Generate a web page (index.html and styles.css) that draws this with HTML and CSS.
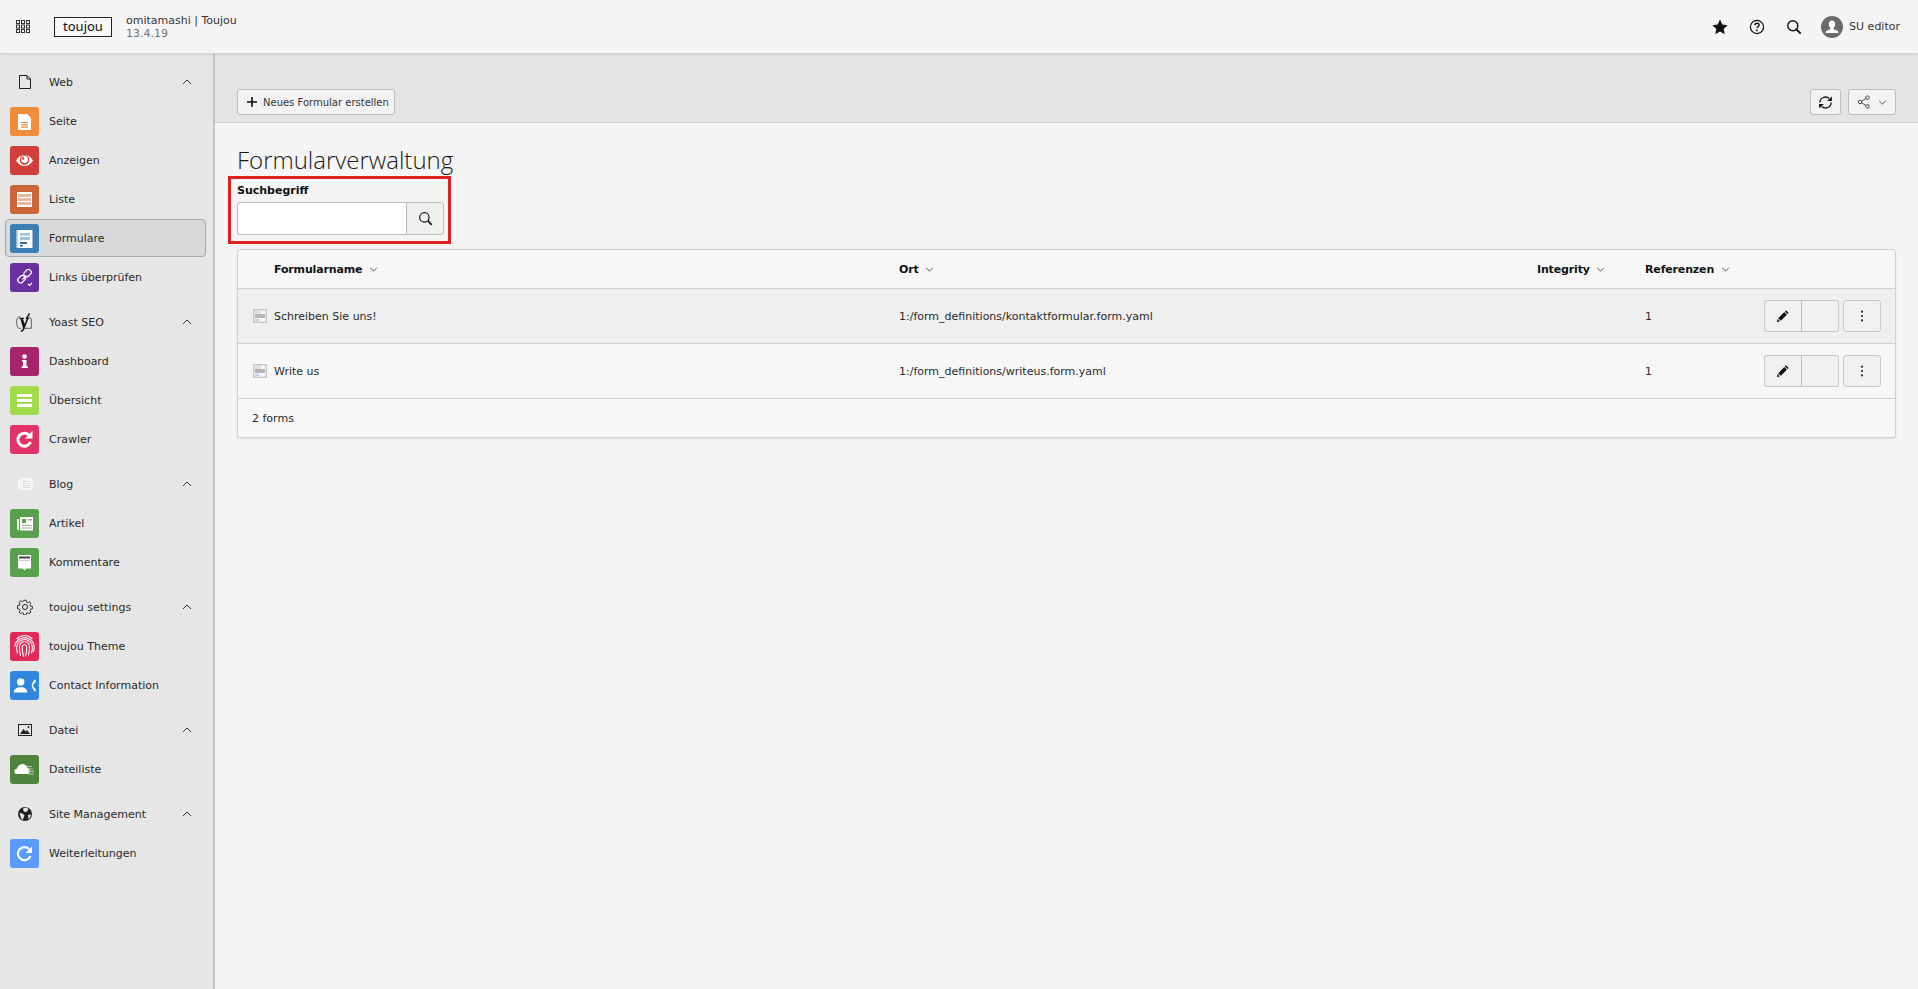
FILE: index.html
```html
<!DOCTYPE html>
<html lang="de">
<head>
<meta charset="utf-8">
<title>Formularverwaltung</title>
<link rel="stylesheet" href="styles.css">
</head>
<body>
<header class="topbar">
  <svg class="grid-icon" viewBox="0 0 14 13"><g fill="none" stroke="#333" stroke-width="1"><rect x=".5" y=".5" width="3" height="3"/><rect x="5.5" y=".5" width="3" height="3"/><rect x="10.5" y=".5" width="3" height="3"/><rect x=".5" y="5" width="3" height="3"/><rect x="5.5" y="5" width="3" height="3"/><rect x="10.5" y="5" width="3" height="3"/><rect x=".5" y="9.5" width="3" height="3"/><rect x="5.5" y="9.5" width="3" height="3"/><rect x="10.5" y="9.5" width="3" height="3"/></g></svg>
  <div class="logo">toujou</div>
  <div class="site"><div class="site-name">omitamashi | Toujou</div><div class="site-version">13.4.19</div></div>
  <div class="top-actions">
    <svg class="top-icon" viewBox="0 0 16 16"><path fill="#111" d="M8 .6l2.3 4.9 5.3.7-3.9 3.7 1 5.3L8 12.600l-4.700 2.600 1-5.300L.4 6.200l5.300-.7z"/></svg>
    <svg class="top-icon" viewBox="0 0 16 16"><circle cx="8" cy="8" r="6.600" fill="none" stroke="#111" stroke-width="1.200"/><path fill="none" stroke="#111" stroke-width="1.400" d="M5.900 6.300c0-1.300 1-2 2.100-2s2.100.8 2.100 1.900c0 1.600-2.100 1.500-2.100 3.100"/><circle cx="8" cy="11.300" r=".9" fill="#111"/></svg>
    <svg class="top-icon" viewBox="0 0 16 16"><circle cx="6.800" cy="6.800" r="5" fill="none" stroke="#111" stroke-width="1.400"/><path stroke="#111" stroke-width="1.800" d="M10.500 10.500l4.200 4.200"/></svg>
    <div class="user">
      <svg class="avatar" viewBox="0 0 22 22"><circle cx="11" cy="11" r="11" fill="#6b6b6b"/><path fill="#fff" d="M11 4.500c2 0 3.200 1.500 3.200 3.600 0 1.700-.7 3.100-1.600 3.900v1.300l3.800 1.500c.6.300 1 .7 1 1.300v.9H4.600v-.9c0-.6.400-1 1-1.300l3.800-1.500V12c-.9-.8-1.600-2.200-1.600-3.900 0-2.100 1.200-3.600 3.200-3.600z"/></svg>
      <span>SU editor</span>
    </div>
  </div>
</header>
<div class="main">
  <nav class="sidebar">
    <section class="group">
      <div class="group-head">
        <span class="head-icon"><svg viewBox="0 0 16 16"><path fill="none" stroke="#222" stroke-width="1" d="M2.500 1.500h7.500l3.500 3.500v9.500h-11z"/><path fill="none" stroke="#222" d="M10 1.500v3.500h3.500"/></svg></span>
        <span class="label">Web</span><svg class="chev" viewBox="0 0 10 6"><path d="M1 5l4-4 4 4"/></svg>
      </div>
      <a class="item"><span class="mod orange"><svg viewBox="0 0 29 29"><path fill="#fff" d="M8 7h9l4 4v12H8z"/><path stroke="#f18c38" stroke-width="1.200" d="M11 15.500h7M11 17.800h7M11 20.100h7"/></svg></span>Seite</a>
      <a class="item"><span class="mod red"><svg viewBox="0 0 29 29"><path fill="#fff" d="M6 14.500c2.500-3.800 5.300-5.500 8.500-5.500s6 1.700 8.500 5.500c-2.500 3.800-5.300 5.500-8.500 5.500S8.500 18.300 6 14.500z"/><circle cx="14.500" cy="14" r="4.800" fill="#d13f3b"/><circle cx="14.500" cy="13.500" r="3.400" fill="#fff"/><circle cx="13" cy="12.500" r="1.300" fill="#d13f3b"/></svg></span>Anzeigen</a>
      <a class="item"><span class="mod rust"><svg viewBox="0 0 29 29"><rect x="7" y="7" width="15" height="15" fill="#e5b8a2"/><path fill="#fff" d="M7 7h15v2H7zM7 12h15v1H7zM7 16h15v1H7zM7 20h15v2H7zM7 7h1v15H7zM21 7h1v15h-1z"/></svg></span>Liste</a>
      <a class="item active"><span class="mod blue"><svg viewBox="0 0 29 29"><rect x="6" y="6" width="16" height="18" fill="#fff" opacity=".45"/><rect x="7.500" y="6" width="15" height="18" fill="#fff"/><path fill="#9dc0dc" d="M10 9h10v2.500H10zM10 13h10v3H10z"/><path fill="#2f6d9f" d="M10 18h7v2h-7zM10 21h3v1.500h-3z"/></svg></span>Formulare</a>
      <a class="item"><span class="mod purple"><svg viewBox="0 0 29 29"><g fill="none" stroke="#fff" stroke-width="1.200"><rect x="13.500" y="7.500" width="8" height="5.500" rx="2.500" transform="rotate(-45 17.500 10.250)"/><rect x="7.500" y="13.500" width="8" height="5.500" rx="2.500" transform="rotate(-45 11.500 16.250)"/><path d="M12.500 16.500l4-4M18 21l1.500 1.500L22 20"/></g></svg></span>Links überprüfen</a>
    </section>
    <section class="group">
      <div class="group-head">
        <span class="head-icon"><svg class="yoast" viewBox="0 0 18 18"><path fill="none" stroke="#333" stroke-width=".7" d="M5 3.500H3.500C2.200 4.500 1.500 6.500 1.500 9s.7 4.500 2 5.500H6M13 3.500l2.500 2v9h-7"/><path fill="#111" d="M4 4.500h4.500v1l-1 .3 1.700 4.600 1.900-4.900-1-.1v-.9h3.400v1l-.9.2-3.700 9.500c-.7 1.700-1.500 2.500-3 2.800l-.6-1.300c1.300-.4 2-1.100 2.400-2.100L5.200 5.800 4 5.500z"/><path stroke="#111" stroke-width="1.300" d="M13.800 .3l-2.800 4.500"/></svg></span>
        <span class="label">Yoast SEO</span><svg class="chev" viewBox="0 0 10 6"><path d="M1 5l4-4 4 4"/></svg>
      </div>
      <a class="item"><span class="mod magenta"><svg viewBox="0 0 29 29"><circle cx="14.500" cy="9.500" r="2.300" fill="#fff"/><path fill="#fff" d="M12 13h4.500v6.500H18V21h-6.500v-1.500H13V14.500h-1z"/></svg></span>Dashboard</a>
      <a class="item"><span class="mod lime"><svg viewBox="0 0 29 29"><path fill="#fff" d="M7 8h15v3H7zM7 13h15v3H7zM7 18h15v3H7z"/></svg></span>Übersicht</a>
      <a class="item"><span class="mod pink"><svg viewBox="0 0 29 29"><path fill="none" stroke="#fff" stroke-width="3" d="M20.500 17a6.500 6.500 0 1 1-1.500-7"/><path fill="#fff" d="M22.500 6v7.500h-7.500z"/></svg></span>Crawler</a>
    </section>
    <section class="group">
      <div class="group-head">
        <span class="head-icon"><svg viewBox="0 0 16 16"><path fill="#f8f8f8" d="M1 4h2v10H1zM3.500 2h12v12h-12z"/><path fill="#dcdcdc" d="M5.500 4.500h3.500v3H5.500zM10 5h3.500v1H10zM10 7h3.500v1H10zM5.500 9h8v1h-8zM5.500 11h8v1h-8z"/></svg></span>
        <span class="label">Blog</span><svg class="chev" viewBox="0 0 10 6"><path d="M1 5l4-4 4 4"/></svg>
      </div>
      <a class="item"><span class="mod green"><svg viewBox="0 0 29 29"><path fill="#fff" opacity=".85" d="M7 10h2v11H7z"/><rect x="10" y="8" width="13" height="13.500" fill="#fff"/><path fill="#59a14f" d="M12 10h4v4h-4z"/><path fill="#aaa" d="M17.500 10H22v1.500h-4.500zM12 16h10v1H12zM12 18.500h10v1H12z"/></svg></span>Artikel</a>
      <a class="item"><span class="mod green"><svg viewBox="0 0 29 29"><path fill="#fff" d="M8 7h13v13.500h-4.500l-2 2-2-2H8z"/><path fill="#444" d="M9 8.500h11v2H9z"/><path fill="#ccc" d="M9 12h11v1H9z"/></svg></span>Kommentare</a>
    </section>
    <section class="group">
      <div class="group-head">
        <span class="head-icon"><svg viewBox="0 0 16 16"><path fill="none" stroke="#222" stroke-width="1" d="M6.800 1h2.400l.4 2 1.300.6 1.700-1.100 1.700 1.700-1.100 1.700.6 1.300 2 .4v2.400l-2 .4-.6 1.300 1.100 1.700-1.700 1.700-1.700-1.100-1.300.6-.4 2H6.800l-.4-2-1.300-.6-1.700 1.100-1.700-1.700 1.100-1.700-.6-1.300-2-.4V6.600l2-.4.6-1.300-1.100-1.700 1.700-1.700 1.700 1.100 1.300-.6z" transform="translate(.4 .3) scale(.95)"/><circle cx="8" cy="8" r="2.500" fill="none" stroke="#222"/></svg></span>
        <span class="label">toujou settings</span><svg class="chev" viewBox="0 0 10 6"><path d="M1 5l4-4 4 4"/></svg>
      </div>
      <a class="item"><span class="mod rose"><svg viewBox="0 0 29 29"><g fill="none" stroke="#fff" stroke-width="1.100" stroke-linecap="round"><path d="M7 6.500a11 11 0 0 1 15 0"/><path d="M4.800 14a9.800 9.800 0 0 1 19.400 0c.2 2-.2 4-.8 5.500"/><path d="M7.500 21c-.8-2-1-4.500-.7-7a7.800 7.800 0 0 1 15.400 0c.3 2.500 0 5-.7 7"/><path d="M10.500 23.500c-.9-3-1.300-6-1-9.500a5 5 0 0 1 9.900 0c.3 3.500 0 6-1 9"/><path d="M13.500 24.500c-1-3.500-1.500-6.500-1.300-10a2.300 2.300 0 0 1 4.500 0c.2 3.500-.2 6.500-1.200 9.500"/></g></svg></span>toujou Theme</a>
      <a class="item"><span class="mod azure"><svg viewBox="0 0 29 29"><circle cx="10.700" cy="11" r="3.700" fill="#fff"/><path fill="#fff" d="M3.700 21.500c0-3.300 3-5.300 7-5.300s6.600 2 6.600 5.300z"/><path fill="none" stroke="#fff" stroke-width="1.500" d="M25 10.500c-1.600.8-2.500 2.200-2.500 4s.9 3.200 2.500 4"/><path fill="#fff" d="M24 8.500l1.800.6-.5 2.700-1.800-.6zM24 20.500l1.800-.6-.5-2.700-1.800.6z"/></svg></span>Contact Information</a>
    </section>
    <section class="group">
      <div class="group-head">
        <span class="head-icon"><svg viewBox="0 0 16 16"><rect x="1.500" y="2.500" width="13" height="11" fill="none" stroke="#222"/><path fill="#222" d="M3 12l3.500-5 2 2.500L10 8l3 4z"/><circle cx="11.500" cy="5" r="1" fill="#222"/></svg></span>
        <span class="label">Datei</span><svg class="chev" viewBox="0 0 10 6"><path d="M1 5l4-4 4 4"/></svg>
      </div>
      <a class="item"><span class="mod forest"><svg viewBox="0 0 29 29"><path fill="#fff" d="M6 19c-2.500-1-2.200-5 .8-5.300C8 10.500 10 9 12.500 9c2.300 0 4.300 1.500 5 4 2.300.2 3 4.500 1 6z"/><path stroke="#b9d0ae" stroke-width="1.200" d="M16 11.500h6M18 14h5M18 16.500h6M18 19h6"/></svg></span>Dateiliste</a>
    </section>
    <section class="group">
      <div class="group-head">
        <span class="head-icon"><svg viewBox="0 0 16 16"><circle cx="8" cy="8" r="7" fill="#222"/><path fill="#e6e6e6" d="M6 2.500l3-1 2.500 1.500-1.500 2.500-2 .5L6.500 5zM2.500 7l3 .5 2 2-1 2.500-1 2-1.500-2zM11 9l3-.5-1 3-1.500 1.500z"/></svg></span>
        <span class="label">Site Management</span><svg class="chev" viewBox="0 0 10 6"><path d="M1 5l4-4 4 4"/></svg>
      </div>
      <a class="item"><span class="mod sky"><svg viewBox="0 0 29 29"><path fill="none" stroke="#fff" stroke-width="2.200" d="M20.500 17a6.500 6.500 0 1 1-1.500-7"/><path fill="#fff" d="M22 7.500v6.500h-6.500z"/></svg></span>Weiterleitungen</a>
    </section>
  </nav>
  <main class="content">
    <div class="docheader">
      <button class="btn new-btn"><svg class="plus" viewBox="0 0 12 12"><path stroke="#111" stroke-width="1.600" d="M6 1v10M1 6h10"/></svg>Neues Formular erstellen</button>
      <div class="doc-right">
        <button class="btn square"><svg class="ico16" viewBox="0 0 16 16"><path fill="none" stroke="#111" stroke-width="1.400" d="M2 8a6 6 0 0 1 10-4.300M14 8a6 6 0 0 1-10 4.300"/><path fill="#111" d="M14.800 1.500v5h-5zM1.200 14.500v-5h5z"/></svg></button>
        <button class="btn share"><svg class="ico14" viewBox="0 0 16 16"><g fill="none" stroke="#444" stroke-width="1.100"><circle cx="3.500" cy="8" r="2"/><circle cx="12" cy="3" r="2"/><circle cx="12" cy="13" r="2"/><path d="M5.300 7l5-3M5.300 9l5 3"/></g></svg><svg class="chev-down" viewBox="0 0 10 6"><path d="M1 1l4 4 4-4"/></svg></button>
      </div>
    </div>
    <div class="body">
      <h1>Formularverwaltung</h1>
      <form class="search">
        <span class="highlight"></span>
        <label class="search-label" for="q">Suchbegriff</label>
        <div class="input-group">
          <input id="q" class="search-input" type="text">
          <button type="button" class="search-btn"><svg class="ico15" viewBox="0 0 16 16"><circle cx="6.800" cy="6.800" r="5" fill="none" stroke="#111" stroke-width="1.300"/><path stroke="#111" stroke-width="1.800" d="M10.500 10.500l4.200 4.200"/></svg></button>
        </div>
      </form>
      <div class="panel">
        <table class="forms">
          <colgroup><col class="c-icon"><col class="c-name"><col class="c-ort"><col class="c-int"><col class="c-ref"><col></colgroup>
          <thead>
            <tr>
              <th></th>
              <th>Formularname <svg class="sort" viewBox="0 0 10 6"><path d="M1 1l4 4 4-4"/></svg></th>
              <th>Ort <svg class="sort" viewBox="0 0 10 6"><path d="M1 1l4 4 4-4"/></svg></th>
              <th>Integrity <svg class="sort" viewBox="0 0 10 6"><path d="M1 1l4 4 4-4"/></svg></th>
              <th>Referenzen <svg class="sort" viewBox="0 0 10 6"><path d="M1 1l4 4 4-4"/></svg></th>
              <th></th>
            </tr>
          </thead>
          <tbody>
            <tr class="hover">
              <td class="icon-cell"><svg class="form-icon" viewBox="0 0 14 14"><rect x=".75" y=".75" width="12.500" height="12.500" fill="#f8f8f8" stroke="#c8c8c8" stroke-width="1.500"/><path fill="#e0e0e0" d="M2 2h6v3H2z"/><path fill="#b6b6b6" d="M2 5h10v4H2z"/><path fill="#79a8ec" d="M2.500 10.500h3.500v1H2.500z"/></svg></td>
              <td class="text">Schreiben Sie uns!</td>
              <td class="text">1:/form_definitions/kontaktformular.form.yaml</td>
              <td></td>
              <td class="text">1</td>
              <td class="actions">
                <div class="btn-group"><button class="act"><svg class="ico14" viewBox="0 0 16 16"><path fill="#111" d="M11.500 1.500l3 3-1.300 1.300-3-3zM9.500 3.500l3 3-7 7-3-3zM2 11.500l2.500 2.500-3.500 1z"/></svg></button><button class="act"></button></div>
                <button class="act single"><svg class="ico14" viewBox="0 0 16 16"><g fill="#222"><circle cx="8" cy="3" r="1.200"/><circle cx="8" cy="8" r="1.200"/><circle cx="8" cy="13" r="1.200"/></g></svg></button>
              </td>
            </tr>
            <tr>
              <td class="icon-cell"><svg class="form-icon" viewBox="0 0 14 14"><rect x=".75" y=".75" width="12.500" height="12.500" fill="#f8f8f8" stroke="#c8c8c8" stroke-width="1.500"/><path fill="#e0e0e0" d="M2 2h6v3H2z"/><path fill="#b6b6b6" d="M2 5h10v4H2z"/><path fill="#79a8ec" d="M2.500 10.500h3.500v1H2.500z"/></svg></td>
              <td class="text">Write us</td>
              <td class="text">1:/form_definitions/writeus.form.yaml</td>
              <td></td>
              <td class="text">1</td>
              <td class="actions">
                <div class="btn-group"><button class="act"><svg class="ico14" viewBox="0 0 16 16"><path fill="#111" d="M11.500 1.500l3 3-1.300 1.300-3-3zM9.500 3.500l3 3-7 7-3-3zM2 11.500l2.500 2.500-3.500 1z"/></svg></button><button class="act"></button></div>
                <button class="act single"><svg class="ico14" viewBox="0 0 16 16"><g fill="#222"><circle cx="8" cy="3" r="1.200"/><circle cx="8" cy="8" r="1.200"/><circle cx="8" cy="13" r="1.200"/></g></svg></button>
              </td>
            </tr>
          </tbody>
        </table>
        <div class="panel-foot">2 forms</div>
      </div>
    </div>
  </main>
</div>
</body>
</html>
```

FILE: styles.css
```css
* { box-sizing: border-box; }
html, body { height: 100%; }
body {
  margin: 0;
  height: 100vh;
  display: flex;
  flex-direction: column;
  overflow: hidden;
  background: #f5f5f5;
  color: #1a1a1a;
  font-family: "DejaVu Sans", Verdana, sans-serif;
  font-size: 11px;
}
svg { display: block; flex: none; }
button { font: inherit; color: inherit; }

.topbar {
  height: 54px;
  flex: none;
  display: flex;
  align-items: center;
  padding-left: 16px;
  background: #f5f5f5;
  border-bottom: 1px solid #d4d4d4;
  box-shadow: 0 1px 2px rgba(0,0,0,.08);
  position: relative;
  z-index: 2;
}
.grid-icon { width: 14px; height: 13px; margin-right: 24px; }
.logo {
  width: 58px;
  height: 20px;
  border: 1.5px solid #222;
  font-family: "Noto Sans", sans-serif;
  font-size: 13px;
  line-height: 16px;
  text-align: center;
  color: #111;
  margin-right: 14px;
  background: #f8f8f8;
}
.site { line-height: 13px; }
.site-name { font-size: 11px; color: #333; }
.site-version { font-size: 11px; color: #737373; }
.top-actions { margin-left: auto; display: flex; align-items: center; padding-right: 18px; }
.top-icon { width: 16px; height: 16px; margin-right: 21px; }
.top-icon:nth-child(3) { margin-right: 19px; }
.user { display: flex; align-items: center; gap: 6px; color: #333; }
.avatar { width: 22px; height: 22px; }

.main { flex: 1; display: flex; min-height: 0; }
.sidebar {
  width: 215px;
  flex: none;
  padding-top: 9px;
  background: #e6e6e6;
  border-right: 2px solid #c4c4c4;
}
.group { margin-bottom: 7px; }
.group-head, .item {
  height: 38px;
  margin-bottom: 1px;
  display: flex;
  align-items: center;
  padding-left: 10px;
  color: #2a2a2a;
}
.head-icon { width: 29px; height: 16px; margin-right: 10px; display: flex; justify-content: center; align-items: center; }
.head-icon svg { width: 16px; height: 16px; }
.head-icon .yoast { width: 19px; height: 19px; }
.label { flex: 1; }
.chev { width: 10px; height: 6px; margin-right: 21px; }
.chev path, .chev-down path, .sort path { fill: none; stroke: #333; stroke-width: 1; }
.item { gap: 10px; }
.item.active {
  margin-left: 5px;
  margin-right: 7px;
  padding-left: 4px;
  background: #d9d9d9;
  border: 1px solid #a8a8a8;
  border-radius: 4px;
}
.mod { width: 29px; height: 29px; border-radius: 3px; flex: none; overflow: hidden; }
.mod svg { width: 29px; height: 29px; }
.orange { background: #f18c38; }
.red { background: #d13f3b; }
.rust { background: #cb6638; }
.blue { background: #3a7fb5; }
.purple { background: #6a2fa0; }
.magenta { background: #a5246a; }
.lime { background: #a2dc4b; }
.pink { background: #e03368; }
.green { background: #59a14f; }
.rose { background: #e12a58; }
.azure { background: #2f86dd; }
.forest { background: #4e833e; }
.sky { background: #5a9bff; }

.content { flex: 1; min-width: 0; display: flex; flex-direction: column; }
.docheader {
  height: 69px;
  flex: none;
  padding: 35px 22px 0 22px;
  display: flex;
  justify-content: space-between;
  align-items: flex-start;
  background: #e4e4e4;
  border-bottom: 1px solid #cfcfcf;
}
.btn {
  height: 26px;
  display: flex;
  align-items: center;
  padding: 0;
  background: #f3f3f3;
  border: 1px solid #bdbdbd;
  border-radius: 3px;
}
.new-btn { width: 158px; padding-left: 8px; gap: 5px; font-size: 10px; color: #333; white-space: nowrap; }
.plus { width: 12px; height: 12px; }
.doc-right { display: flex; gap: 7px; }
.square { width: 31px; justify-content: center; }
.share { width: 48px; justify-content: center; gap: 7px; }
.chev-down { width: 9px; height: 5px; }
.ico16 { width: 15px; height: 15px; }
.ico14 { width: 14px; height: 14px; }
.ico15 { width: 15px; height: 15px; }

.body { padding: 22px 22px 0 22px; }
h1 {
  margin: 0;
  font-family: "Open Sans", sans-serif;
  font-weight: 300;
  font-size: 24px;
  line-height: 29px;
  color: #1a1a1a;
}
.search { position: relative; margin-top: 9px; width: 207px; }
.highlight {
  position: absolute;
  left: -9px;
  top: -7px;
  width: 223px;
  height: 68px;
  border: 3px solid #e01f1f;
  pointer-events: none;
}
.search-label { display: block; font-weight: 700; line-height: 14px; padding-top: 1px; height: 19px; color: #111; }
.input-group { display: flex; height: 33px; }
.search-input {
  flex: 1;
  min-width: 0;
  background: #fff;
  border: 1px solid #bdbdbd;
  border-right: 0;
  border-radius: 3px 0 0 3px;
  outline: 0;
}
.search-btn {
  width: 38px;
  display: flex;
  align-items: center;
  justify-content: center;
  padding: 0;
  background: #f0f0f0;
  border: 1px solid #bdbdbd;
  border-radius: 0 3px 3px 0;
}
.panel {
  margin-top: 14px;
  background: #f7f7f7;
  border: 1px solid #d0d0d0;
  border-radius: 3px;
  box-shadow: 0 1px 2px rgba(0,0,0,.1);
}
.forms { width: 100%; table-layout: fixed; border-collapse: collapse; }
.c-icon { width: 36px; }
.c-name { width: 625px; }
.c-ort { width: 638px; }
.c-int { width: 108px; }
.c-ref { width: 100px; }
.forms th {
  height: 38px;
  padding: 1px 0 0;
  text-align: left;
  font-weight: 700;
  letter-spacing: -.15px;
  color: #111;
  border-bottom: 1px solid #d0d0d0;
  white-space: nowrap;
}
.sort { display: inline-block; width: 9px; height: 5px; margin-left: 3px; vertical-align: 1px; }
.forms td { height: 55px; padding: 0; border-bottom: 1px solid #d0d0d0; color: #2a2a2a; }
.forms td.text { padding-top: 1px; }
.hover td { background: #efefef; }
.icon-cell .form-icon { width: 14px; height: 14px; margin-left: 15px; }
.actions { display: flex; justify-content: flex-end; align-items: center; gap: 4px; padding-right: 14px !important; }
.btn-group { display: flex; }
.act {
  width: 38px;
  height: 32px;
  display: flex;
  align-items: center;
  justify-content: center;
  padding: 0;
  background: #f1f1f1;
  border: 1px solid #c8c8c8;
}
.btn-group .act:first-child { border-radius: 3px 0 0 3px; border-right-color: #bdbdbd; }
.btn-group .act:last-child { border-radius: 0 3px 3px 0; border-left: 0; width: 37px; }
.act.single { border-radius: 3px; }
.panel-foot { height: 38px; padding-left: 14px; display: flex; align-items: center; color: #2a2a2a; }
```
